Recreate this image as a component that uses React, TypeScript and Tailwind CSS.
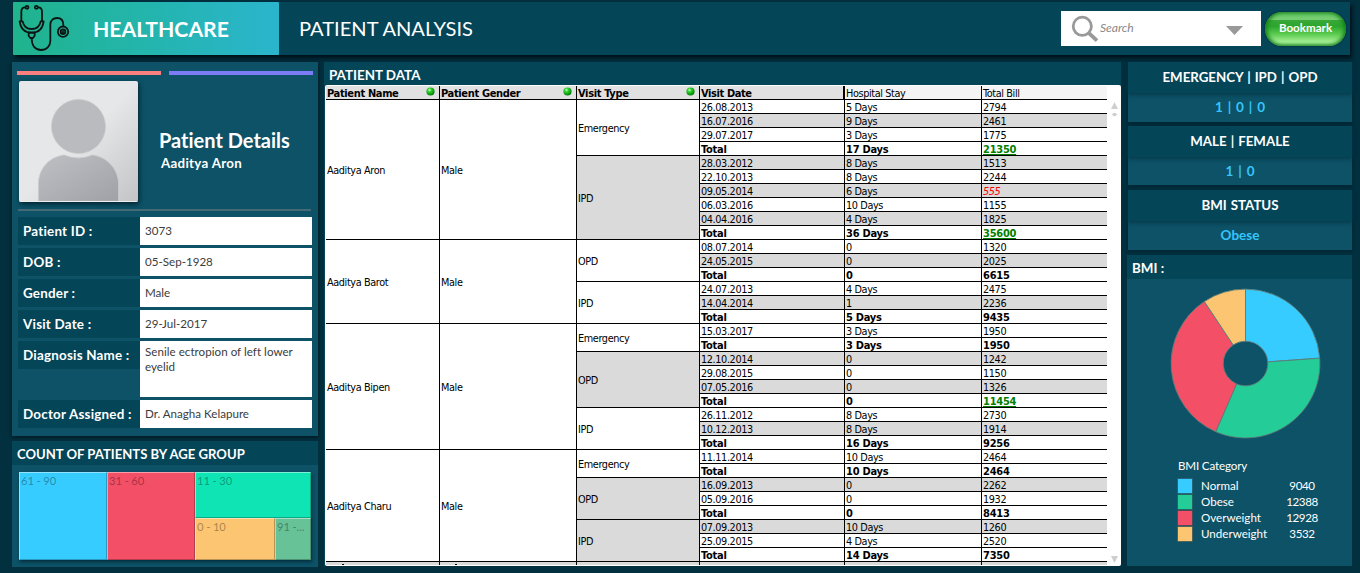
import React from 'react';

type Visit = { date: string; stay: string; bill: string; shaded?: boolean; tone?: 'link' | 'alert' };
type VisitGroup = { type: string; shaded?: boolean; visits: Visit[]; total: Visit };
type Patient = { name: string; gender: string; groups: VisitGroup[] };

const v = (date: string, stay: string, bill: string, shaded = false, tone?: 'link' | 'alert'): Visit => ({ date, stay, bill, shaded, tone });

const patients: Patient[] = [
  {
    name: 'Aaditya Aron',
    gender: 'Male',
    groups: [
      {
        type: 'Emergency',
        visits: [v('26.08.2013', '5 Days', '2794'), v('16.07.2016', '9 Days', '2461', true), v('29.07.2017', '3 Days', '1775')],
        total: v('Total', '17 Days', '21350', false, 'link'),
      },
      {
        type: 'IPD',
        shaded: true,
        visits: [
          v('28.03.2012', '8 Days', '1513', true),
          v('22.10.2013', '8 Days', '2244'),
          v('09.05.2014', '6 Days', '555', true, 'alert'),
          v('06.03.2016', '10 Days', '1155'),
          v('04.04.2016', '4 Days', '1825', true),
        ],
        total: v('Total', '36 Days', '35600', false, 'link'),
      },
    ],
  },
  {
    name: 'Aaditya Barot',
    gender: 'Male',
    groups: [
      { type: 'OPD', visits: [v('08.07.2014', '0', '1320'), v('24.05.2015', '0', '2025', true)], total: v('Total', '0', '6615') },
      { type: 'IPD', visits: [v('24.07.2013', '4 Days', '2475'), v('14.04.2014', '1', '2236', true)], total: v('Total', '5 Days', '9435') },
    ],
  },
  {
    name: 'Aaditya Bipen',
    gender: 'Male',
    groups: [
      { type: 'Emergency', visits: [v('15.03.2017', '3 Days', '1950')], total: v('Total', '3 Days', '1950') },
      {
        type: 'OPD',
        shaded: true,
        visits: [v('12.10.2014', '0', '1242', true), v('29.08.2015', '0', '1150'), v('07.05.2016', '0', '1326', true)],
        total: v('Total', '0', '11454', false, 'link'),
      },
      { type: 'IPD', visits: [v('26.11.2012', '8 Days', '2730'), v('10.12.2013', '8 Days', '1914', true)], total: v('Total', '16 Days', '9256') },
    ],
  },
  {
    name: 'Aaditya Charu',
    gender: 'Male',
    groups: [
      { type: 'Emergency', visits: [v('11.11.2014', '10 Days', '2464')], total: v('Total', '10 Days', '2464') },
      { type: 'OPD', shaded: true, visits: [v('16.09.2013', '0', '2262', true), v('05.09.2016', '0', '1932')], total: v('Total', '0', '8413') },
      { type: 'IPD', shaded: true, visits: [v('07.09.2013', '10 Days', '1260', true), v('25.09.2015', '4 Days', '2520')], total: v('Total', '14 Days', '7350') },
    ],
  },
];

const cell = 'shrink-0 border-r border-b border-black pl-px whitespace-nowrap';

function billTone(row: Visit) {
  if (row.tone === 'link') return 'text-[#008000] underline decoration-1 underline-offset-1';
  if (row.tone === 'alert') return 'text-[#ff0000] italic';
  return '';
}

function VisitRow({ row, total }: { row: Visit; total?: boolean }) {
  return (
    <div
      className={`flex h-[14px] leading-[15px] ${row.shaded ? 'bg-[#dadada]' : 'bg-white'} ${
        total ? 'text-[11px] font-bold tracking-[-0.26px]' : ''
      }`}
    >
      <div className={`${cell} w-[145px]`}>{row.date}</div>
      <div className={`${cell} w-[137px]`}>{row.stay}</div>
      <div className="w-[125px] border-b border-black pl-px">
        <span className={billTone(row)}>{row.bill}</span>
      </div>
    </div>
  );
}

function HeaderCell({ label, width, dot }: { label: string; width: string; dot?: boolean }) {
  return (
    <div
      className={`flex shrink-0 items-center justify-between border-r border-b border-black bg-[#e1e1e1] pr-1 pl-px text-[11px] font-bold tracking-[-0.35px] whitespace-nowrap ${width}`}
    >
      <span className="pt-[2px]">{label}</span>
      {dot && (
        <svg className="mb-[3px] size-[9px]" viewBox="0 0 9 9">
          <defs>
            <radialGradient id="led" cx="0.38" cy="0.32" r="0.65">
              <stop offset="0" stopColor="#d8ffc8" />
              <stop offset="0.35" stopColor="#2ed32a" />
              <stop offset="1" stopColor="#04820a" />
            </radialGradient>
          </defs>
          <circle cx="4.5" cy="4.5" r="4.1" fill="url(#led)" />
        </svg>
      )}
    </div>
  );
}

function PatientTable() {
  return (
    <div className="flex h-[481px] overflow-hidden rounded-[2px] bg-white pt-px pl-px font-['DejaVu_Sans_Condensed','DejaVu_Sans',sans-serif] text-[10.8px] tracking-[-0.38px] text-black">
      <div className="w-[781px] shrink-0 overflow-hidden">
        <div className="flex h-[14px] leading-[15px]">
          <HeaderCell label="Patient Name" width="w-[114px]" dot />
          <HeaderCell label="Patient Gender" width="w-[137px]" dot />
          <HeaderCell label="Visit Type" width="w-[123px]" dot />
          <div className="w-[145px] shrink-0 border-r-2 border-b border-black bg-[#e1e1e1] pl-px text-[11px] font-bold tracking-[-0.4px]">Visit Date</div>
          <div className="w-[137px] shrink-0 border-r border-b border-black bg-[#f4f4f4] pl-px">Hospital Stay</div>
          <div className="w-[125px] border-b border-black bg-[#f4f4f4] pl-px">Total Bill</div>
        </div>
        {patients.map((p) => (
          <div key={p.name} className="flex">
            <div className={`${cell} flex w-[114px] items-center pt-[3px]`}>{p.name}</div>
            <div className={`${cell} flex w-[137px] items-center pt-[3px]`}>{p.gender}</div>
            <div>
              {p.groups.map((g) => (
                <div key={g.type} className="flex">
                  <div className={`${cell} flex w-[123px] items-center pt-[3px] ${g.shaded ? 'bg-[#dadada]' : 'bg-white'}`}>{g.type}</div>
                  <div>
                    {g.visits.map((row) => (
                      <VisitRow key={row.date} row={row} />
                    ))}
                    <VisitRow row={g.total} total />
                  </div>
                </div>
              ))}
            </div>
          </div>
        ))}
        <div className="flex h-[3px] bg-[#dadada]">
          <div className="flex w-[114px] items-end border-r border-black pl-4">
            <i className="h-px w-[2px] bg-black" />
          </div>
          <div className="flex w-[137px] items-end border-r border-black pl-[15px]">
            <i className="h-px w-[2px] bg-black" />
          </div>
          <div className="w-[123px] border-r border-black" />
          <div className="w-[145px] border-r border-black" />
          <div className="w-[137px] border-r border-black" />
        </div>
      </div>
      <div className="flex flex-1 flex-col items-center justify-between pt-4 pb-[3px]">
        <svg className="h-[15px] w-[7px]" viewBox="0 0 7 15" fill="#cfcfcf">
          <path d="M3.5 0 L7 7 H0 Z" />
          <ellipse cx="3.5" cy="12.5" rx="2.2" ry="1.7" />
        </svg>
        <svg className="h-[7px] w-[7px]" viewBox="0 0 7 7" fill="#cfcfcf">
          <path d="M0 0 H7 L3.5 7 Z" />
        </svg>
      </div>
    </div>
  );
}

function Stethoscope() {
  return (
    <svg className="h-[53px] w-[60px] shrink-0" viewBox="15 6 180 159" fill="none" stroke="#0b1614" strokeWidth="5.4" strokeLinecap="round" strokeLinejoin="round">
      <circle cx="57" cy="22" r="4.5" />
      <circle cx="85" cy="22" r="4.5" />
      <path d="M52 22 C43 22 40 27 40 35 V63" />
      <path d="M90 22 C99 22 102 27 102 35 V63" />
      <path d="M35 64 H44 C47 80 58 87 71 87 C84 87 95 80 98 64 H107 C104 86 91 98 71 98 C51 98 38 86 35 64 Z" />
      <path d="M62 98 H80 V107 L75 114 H67 L62 107 Z" />
      <path d="M71 115 C71 137 82 150 99 150 C116 150 127 138 127 122 V75 C127 61 136 54 147 54 C158 54 166 61 166 74 V78" />
      <circle cx="165" cy="95" r="15.5" />
      <circle cx="165" cy="95" r="7" />
      <circle cx="165" cy="95" r="1.5" />
    </svg>
  );
}

function TopBar() {
  return (
    <header className="ml-px flex h-[53px] w-[1337px] items-center bg-[#054558] shadow-[2px_3px_4px_#001018]">
      <div className="flex h-full w-[266px] items-center rounded-[1px] bg-linear-to-r from-[#20b38c] to-[#2bb5cd]">
        <Stethoscope />
        <h1 className="ml-[20px] text-[21.2px] leading-6 font-bold text-white">HEALTHCARE</h1>
      </div>
      <h2 className="mb-[2px] ml-[20px] text-[20.1px] leading-6 text-white">PATIENT ANALYSIS</h2>
      <div className="ml-auto flex h-[35px] w-[200px] items-center bg-white">
        <svg className="ml-[10px] h-[28px] w-[28px]" viewBox="0 0 28 28" fill="none" stroke="#999">
          <circle cx="11.3" cy="11.3" r="9.1" strokeWidth="2.8" />
          <path d="M17.6 17.8 L26 25.6" strokeWidth="3.8" />
        </svg>
        <span className="ml-[1px] text-[12.2px] tracking-[-0.1px] text-[#8a8a8a] italic">Search</span>
        <svg className="mt-[3px] mr-[18px] ml-auto h-[9px] w-[17px]" viewBox="0 0 17 9" fill="#999">
          <path d="M0 0 H17 L8.5 9 Z" />
        </svg>
      </div>
      <button className="mr-[4px] ml-[4px] h-[34px] w-[81px] rounded-full bg-[linear-gradient(180deg,#63c863_0%,#79cd74_22%,#38a838_25%,#2aa62c_42%,#5ccc50_65%,#a5ef96_88%,#8fdc84_100%)] pb-[2px] text-[11.6px] font-bold text-white shadow-[0_0_2px_#04202a,inset_2px_0_4px_#17801d,inset_-2px_0_4px_#17801d]">
        Bookmark
      </button>
    </header>
  );
}

const details: { label: string; value: string; tall?: boolean }[] = [
  { label: 'Patient ID :', value: '3073' },
  { label: 'DOB :', value: '05-Sep-1928' },
  { label: 'Gender :', value: 'Male' },
  { label: 'Visit Date :', value: '29-Jul-2017' },
  { label: 'Diagnosis Name :', value: 'Senile ectropion of left lower eyelid', tall: true },
  { label: 'Doctor Assigned :', value: 'Dr. Anagha Kelapure' },
];

function PatientCard() {
  return (
    <section className="h-[374px] bg-[#0d5267] pt-[9px] pl-[5px] shadow-[0_1px_4px_#00141c]">
      <div className="flex gap-2">
        <div className="h-1 w-[144px] bg-[#f9807f]" />
        <div className="h-1 w-[144px] bg-[#7c7cf6]" />
      </div>
      <div className="mt-[6px] ml-[2px] flex">
        <svg className="h-[121px] w-[119px] rounded-[2px] shadow-[1px_2px_5px_#04222e]" viewBox="0 0 119 121">
          <defs>
            <linearGradient id="photo" x1="0" y1="0" x2="1" y2="1">
              <stop offset="0.5" stopColor="#e6e7e9" />
              <stop offset="1" stopColor="#c3c4c6" />
            </linearGradient>
            <linearGradient id="torso" x1="0" y1="0" x2="1" y2="1">
              <stop offset="0" stopColor="#bfc0c4" />
              <stop offset="1" stopColor="#a0a1a6" />
            </linearGradient>
          </defs>
          <rect width="119" height="121" fill="url(#photo)" />
          <path d="M19.5 120.3 V103 C19.5 88 30 76 45 74 Q59.5 80 73.5 74 C88 76 99.5 88 99.5 103 V120.3 Z" fill="url(#torso)" stroke="#c9cacc" strokeWidth="0.8" />
          <circle cx="59.5" cy="45.5" r="27" fill="#babbbf" stroke="#c9cacc" strokeWidth="0.8" />
          <path d="M0 120.5 H119" stroke="#eeeeee" />
        </svg>
        <div className="ml-[21px] pt-[47px] font-bold text-white">
          <h3 className="text-[20px] leading-6">Patient Details</h3>
          <p className="ml-[2px] text-[13.3px] leading-[22px] tracking-[0.3px]">Aaditya Aron</p>
        </div>
      </div>
      <div className="mt-[7px] ml-px h-[2px] w-[293px] bg-[#446a75]" />
      <div className="mt-[6px] ml-px flex w-[294px] flex-col gap-[3px]">
        {details.map((d) => (
          <div key={d.label} className="flex items-start">
            <div className="flex h-[28px] w-[122px] items-center bg-[#054558] pt-px pl-[5px] text-[13.4px] leading-[19px] font-bold tracking-[0.22px] whitespace-nowrap text-white">
              {d.label}
            </div>
            <div
              className={`w-[172px] bg-white pl-[5px] text-[11.6px] text-[#3c3c3c] ${
                d.tall ? 'h-[56px] pt-[3px] pr-4 leading-[15px] tracking-[0.03px]' : 'h-[28px] leading-[28px]'
              }`}
            >
              {d.value}
            </div>
          </div>
        ))}
      </div>
    </section>
  );
}

const tile = 'border-t border-l border-t-white/45 border-l-white/45 border-r border-b border-r-black/25 border-b-black/25 pl-px leading-[16px] whitespace-nowrap';

function AgeGroups() {
  return (
    <section className="mt-[5px] h-[126px] bg-[#0d5267]">
      <h4 className="h-[24px] bg-[#054558] pt-[3px] pl-[5px] text-[13.1px] leading-[20px] font-bold text-white">COUNT OF PATIENTS BY AGE GROUP</h4>
      <div className="mt-[7px] ml-[7px] flex h-[88px] w-[292px] text-[11.2px] tracking-[-0.1px] text-black/35 shadow-[1px_2px_3px_#04303f]">
        <div className={`${tile} w-[88px] bg-[#37ccff]`}>61 - 90</div>
        <div className={`${tile} w-[88px] bg-[#f34f66]`}>31 - 60</div>
        <div className="flex w-[116px] flex-col">
          <div className={`${tile} h-[46px] bg-[#0fe5b4]`}>11 - 30</div>
          <div className="flex h-[42px]">
            <div className={`${tile} w-[80px] bg-[#fbc572]`}>0 - 10</div>
            <div className={`${tile} w-[36px] bg-[#67c298]`}>91 -...</div>
          </div>
        </div>
      </div>
    </section>
  );
}

function StatCard({ title, value, size }: { title: string; value: string; size: string }) {
  return (
    <section className={`ml-px flex flex-col bg-[#0d5267] text-center text-[13.3px] font-bold shadow-[0_1px_3px_#00222e] ${size}`}>
      <h4 className="flex h-[31px] items-center justify-center bg-[#054558] pt-px [word-spacing:0.8px] text-white shadow-[0_2px_4px_#053a4a]">{title}</h4>
      <p className="flex flex-1 items-center justify-center text-[13.5px] [word-spacing:1.6px] text-[#35c5fb]">{value}</p>
    </section>
  );
}

const categories = [
  { name: 'Normal', count: 9040, color: '#37ccff' },
  { name: 'Obese', count: 12388, color: '#24cd98' },
  { name: 'Overweight', count: 12928, color: '#f34f66' },
  { name: 'Underweight', count: 3532, color: '#fbc572' },
];

function Donut() {
  const sum = categories.reduce((s, c) => s + c.count, 0);
  const outer = 74.4;
  const inner = 22.3;
  let acc = 0;
  const at = (r: number, t: number) => `${(75.5 + r * Math.sin(t)).toFixed(2)} ${(75.5 - r * Math.cos(t)).toFixed(2)}`;
  return (
    <svg className="h-[151px] w-[151px]" viewBox="0 0 151 151">
      {categories.map((c) => {
        const a = (acc / sum) * Math.PI * 2;
        acc += c.count;
        const b = (acc / sum) * Math.PI * 2;
        return (
          <path
            key={c.name}
            d={`M${at(outer, a)} A${outer} ${outer} 0 0 1 ${at(outer, b)} L${at(inner, b)} A${inner} ${inner} 0 0 0 ${at(inner, a)} Z`}
            fill={c.color}
            stroke="#5d7c78"
            strokeWidth="0.9"
          />
        );
      })}
    </svg>
  );
}

function BmiCard() {
  return (
    <section className="mt-[5px] flex h-[311px] flex-col bg-[#0d5267]">
      <h4 className="h-[24px] bg-[#054558] pt-[3px] pl-[5px] text-[13.4px] leading-[21px] font-bold text-white">BMI :</h4>
      <div className="mt-[9px] ml-[43px]">
        <Donut />
      </div>
      <div className="mt-[19px] ml-[50px] text-[11.6px] text-white">
        <p className="ml-px h-[20px] leading-[16px] tracking-[-0.15px]">BMI Category</p>
        {categories.map((c) => (
          <div key={c.name} className="flex h-4 items-center leading-4">
            <svg className="h-4 w-4" viewBox="0 0 16 16">
              <rect x="0.5" y="0.5" width="15" height="15" fill={c.color} stroke="#2a4a50" strokeOpacity="0.6" />
            </svg>
            <span className="ml-[8px] w-[80px]">{c.name}</span>
            <span className="w-[42px] text-center tracking-[-0.4px]">{c.count}</span>
          </div>
        ))}
      </div>
    </section>
  );
}

export default function App() {
  return (
    <div className="h-[573px] w-[1360px] overflow-hidden bg-[#02303f] pt-[2px] pl-3 font-['Lato',sans-serif] [font-variant-ligatures:none]">
      <TopBar />
      <main className="mt-[7px] flex">
        <div className="w-[306px]">
          <PatientCard />
          <AgeGroups />
        </div>
        <section className="ml-[6px] h-[504px] w-[797px] bg-[#054558]">
          <h4 className="h-[23px] pt-[3px] pl-[5px] text-[13.4px] leading-[20px] font-bold text-white">PATIENT DATA</h4>
          <div className="pl-px">
            <PatientTable />
          </div>
        </section>
        <div className="ml-[6px] w-[225px]">
          <StatCard title="EMERGENCY | IPD | OPD" value="1 | 0 | 0" size="h-[60px]" />
          <StatCard title="MALE | FEMALE" value="1 | 0" size="mt-[4px] h-[59px]" />
          <StatCard title="BMI STATUS" value="Obese" size="mt-[5px] h-[60px]" />
          <BmiCard />
        </div>
      </main>
    </div>
  );
}
